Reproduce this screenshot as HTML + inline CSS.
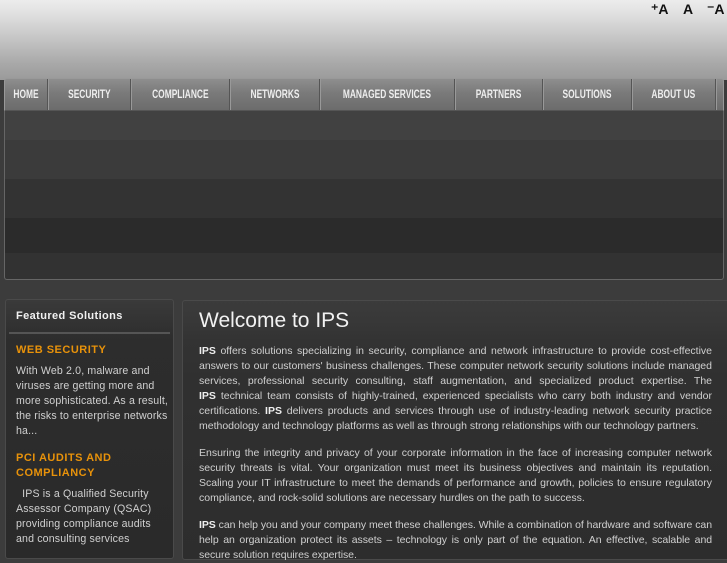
<!DOCTYPE html>
<html><head><style>
*{margin:0;padding:0;box-sizing:border-box}
body{width:727px;height:545px;overflow:hidden;background:#3c3c3c;font-family:"Liberation Sans",Arial,sans-serif;position:relative}
.top{position:absolute;left:0;top:0;width:727px;height:80px;background:linear-gradient(#ececec,#e2e2e2 15%,#c8c8c8 45%,#a8a8a8 80%,#9a9a9a)}
.fs{position:absolute;top:1px;font:bold 14px "Liberation Sans",sans-serif;color:#111}
.nav{position:absolute;left:4px;top:78px;width:720px;height:33px;background:linear-gradient(#8e8e8e,#7a7a7a 45%,#6c6c6c);border:1px solid #999;border-bottom:1px solid #555;border-radius:3px 3px 0 0}
.nav div{position:absolute;top:0;height:31px;line-height:30px;color:#eee;font-size:12px;font-weight:bold;text-align:center;border-right:1px solid #555;box-shadow:1px 0 0 #999;white-space:nowrap}
.nav span{display:inline-block;transform:scaleX(0.7)}
.ban{position:absolute;left:4px;top:111px;width:720px;height:169px;border:1px solid #666;border-top:none;border-radius:0 0 3px 3px;background:linear-gradient(#414141 0 29px,#3b3b3b 29px 68px,#333 68px 107px,#2b2b2b 107px 142px,#323232 142px)}
.side{position:absolute;left:5px;top:299px;width:169px;height:260px;background:linear-gradient(#3a3a3a,#2d2d2d 40px,#2a2a2a);border:1px solid #4a4a4a;border-radius:3px}
.side h3{color:#f0f0f0;font-size:11px;padding:10px 0 0 7px;height:34px;border-bottom:2px solid #555;margin:0 3px;letter-spacing:0.4px}
.side h4{color:#e8920a;font-size:11px;line-height:15px;margin:9px 0 0 10px;letter-spacing:0.5px}
.side p{color:#d0d0d0;font-size:10.6px;line-height:15px;margin:6px 2px 0 10px;letter-spacing:0.15px}
.main{position:absolute;left:182px;top:300px;width:548px;height:260px;background:linear-gradient(#3b3b3b,#383838 20px,#333 40px,#303030 80px,#2d2d2d);border:1px solid #4a4a4a;border-radius:3px}
.main h1{font-weight:normal;color:#f2f2f2;font-size:21px;padding:8px 0 0 16px;height:43px}
.main p{color:#d0d0d0;font-size:10.5px;line-height:15px;text-align:justify;width:513px;margin:0 0 12px 16px;letter-spacing:0}
b{color:#eee}
</style></head><body>
<div class="top"></div>
<div class="fs" style="left:651px">⁺A</div><div class="fs" style="left:683px">A</div><div class="fs" style="left:707px">⁻A</div>
<div class="nav">
<div style="left:0;width:43px"><span>HOME</span></div>
<div style="left:43px;width:83px"><span>SECURITY</span></div>
<div style="left:126px;width:99px"><span>COMPLIANCE</span></div>
<div style="left:225px;width:90px"><span>NETWORKS</span></div>
<div style="left:315px;width:135px"><span>MANAGED SERVICES</span></div>
<div style="left:450px;width:88px"><span>PARTNERS</span></div>
<div style="left:538px;width:89px"><span>SOLUTIONS</span></div>
<div style="left:627px;width:84px"><span>ABOUT US</span></div>
</div>
<div class="ban"></div>
<div class="side">
<h3>Featured Solutions</h3>
<h4>WEB SECURITY</h4>
<p>With Web 2.0, malware and viruses are getting more and more sophisticated. As&nbsp;a&nbsp;result, the risks to enterprise networks ha...</p>
<h4 style="margin-top:12px">PCI AUDITS AND COMPLIANCY</h4>
<p>&nbsp; IPS is a Qualified Security Assessor Company (QSAC) providing compliance audits and consulting services</p>
</div>
<div class="main">
<h1>Welcome to IPS</h1>
<p><b>IPS</b> offers solutions specializing in security, compliance and network infrastructure to provide cost&#8209;effective answers to our customers' business challenges. These computer network security solutions include managed services, professional security consulting, staff augmentation, and specialized product expertise. The <b>IPS</b>&nbsp;technical team consists of highly-trained, experienced specialists who carry both industry and vendor certifications. <b>IPS</b> delivers products and services through use of industry-leading network security practice methodology and technology platforms as well as through strong relationships with our technology partners.</p>
<p>Ensuring the integrity and privacy of your corporate information in the face of increasing computer network security threats is vital. Your organization must meet its business objectives and maintain its reputation. Scaling your IT infrastructure to meet the demands of performance and growth, policies to ensure regulatory compliance, and rock-solid solutions are necessary hurdles on the path to success.</p>
<p style="letter-spacing:-0.06px"><b>IPS</b> can help you and your company meet these challenges. While a combination of hardware and software can help an organization protect its assets – technology is only part of the equation. An effective, scalable and secure solution requires expertise.</p>
</div>
</body></html>
